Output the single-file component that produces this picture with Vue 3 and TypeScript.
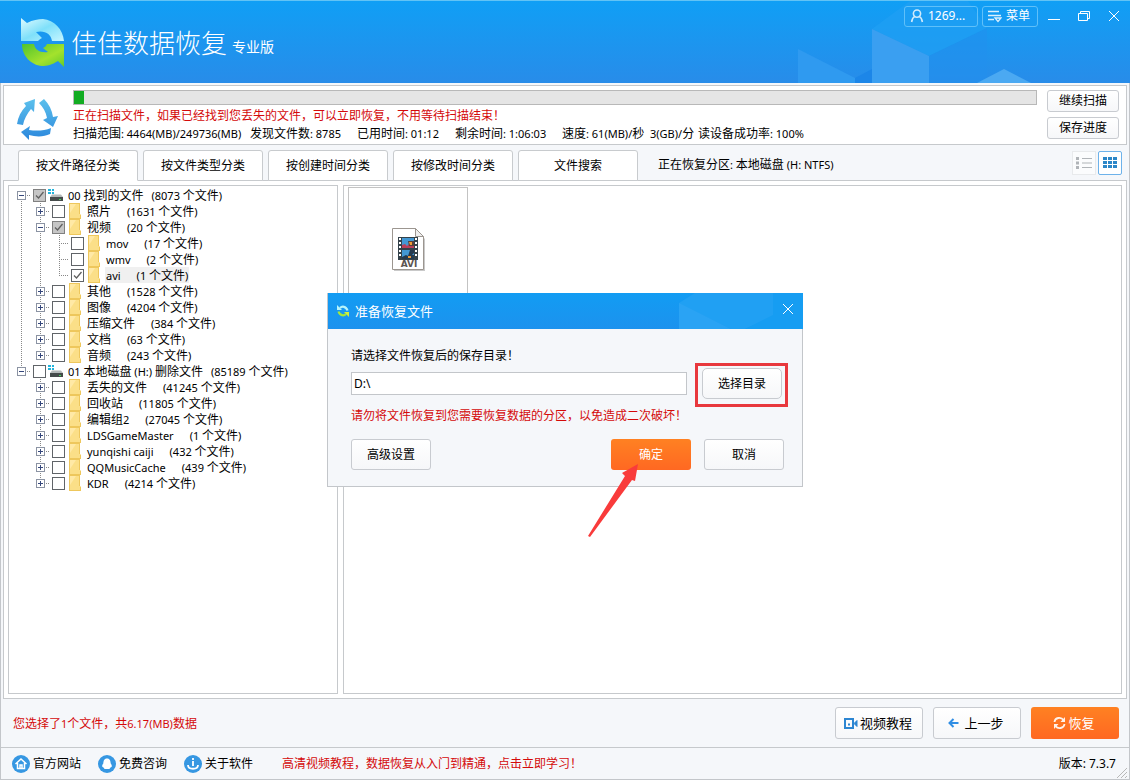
<script setup lang="ts">
import { computed, h, ref } from 'vue'

// Wraps Latin runs in their own span so they can take a smaller size than the Chinese text.
const Mixed = (props: { text: string }) =>
  h(
    'span',
    { class: 'mixed' },
    props.text
      .split(/([\x20-\x7e]+)/)
      .filter((part) => part.length > 0)
      .map((part) => (/^[\x20-\x7e]/.test(part) ? h('span', { class: 'latin' }, part) : part)),
  )
Mixed.props = ['text']

type Check = 'off' | 'on' | 'partial'
interface TreeRow {
  level: number
  name: string
  count: string
  check: Check
  open?: boolean
  guides: string[]
  selected?: boolean
}

const rows = ref<TreeRow[]>([
  { level: 0, name: '00 找到的文件', count: '(8073 个文件)', check: 'partial', open: true, guides: ['start'] },
  { level: 1, name: '照片', count: '(1631 个文件)', check: 'off', open: false, guides: ['line', 'tee'] },
  { level: 1, name: '视频', count: '(20 个文件)', check: 'partial', open: true, guides: ['line', 'tee'] },
  { level: 2, name: 'mov', count: '(17 个文件)', check: 'off', guides: ['line', 'line', 'tee'] },
  { level: 2, name: 'wmv', count: '(2 个文件)', check: 'off', guides: ['line', 'line', 'tee'] },
  { level: 2, name: 'avi', count: '(1 个文件)', check: 'on', guides: ['line', 'line', 'end'], selected: true },
  { level: 1, name: '其他', count: '(1528 个文件)', check: 'off', open: false, guides: ['line', 'tee'] },
  { level: 1, name: '图像', count: '(4204 个文件)', check: 'off', open: false, guides: ['line', 'tee'] },
  { level: 1, name: '压缩文件', count: '(384 个文件)', check: 'off', open: false, guides: ['line', 'tee'] },
  { level: 1, name: '文档', count: '(63 个文件)', check: 'off', open: false, guides: ['line', 'tee'] },
  { level: 1, name: '音频', count: '(243 个文件)', check: 'off', open: false, guides: ['line', 'end'] },
  { level: 0, name: '01 本地磁盘 (H:) 删除文件', count: '(85189 个文件)', check: 'off', open: true, guides: ['end'] },
  { level: 1, name: '丢失的文件', count: '(41245 个文件)', check: 'off', open: false, guides: ['blank', 'tee'] },
  { level: 1, name: '回收站', count: '(11805 个文件)', check: 'off', open: false, guides: ['blank', 'tee'] },
  { level: 1, name: '编辑组2', count: '(27045 个文件)', check: 'off', open: false, guides: ['blank', 'tee'] },
  { level: 1, name: 'LDSGameMaster', count: '(1 个文件)', check: 'off', open: false, guides: ['blank', 'tee'] },
  { level: 1, name: 'yunqishi caiji', count: '(432 个文件)', check: 'off', open: false, guides: ['blank', 'tee'] },
  { level: 1, name: 'QQMusicCache', count: '(439 个文件)', check: 'off', open: false, guides: ['blank', 'tee'] },
  { level: 1, name: 'KDR', count: '(4214 个文件)', check: 'off', open: false, guides: ['blank', 'end'] },
])

const tabs = ['按文件路径分类', '按文件类型分类', '按创建时间分类', '按修改时间分类', '文件搜索']
const activeTab = ref(0)
const stats = [
  '扫描范围: 4464(MB)/249736(MB)',
  '发现文件数: 8785',
  '已用时间: 01:12',
  '剩余时间: 1:06:03',
  '速度: 61(MB)/秒',
  '3(GB)/分',
  '读设备成功率: 100%',
]
const progress = ref(1)
const barStyle = computed(() => ({ width: `${progress.value}%` }))
const folder = ref('D:\\')
</script>

<template>
  <div class="window">
    <header class="titlebar">
      <svg class="cubes" width="260" height="82" viewBox="0 0 260 82" aria-hidden="true">
        <path d="M0 48 57 77V82H0Z" fill="#2f9af0" />
        <path d="M57 77 74 68V82H57Z" fill="#1c86e8" />
        <path d="M74 28 112 0H170L189 27 131 55Z" fill="#20a0f3" opacity=".7" />
        <path d="M74 28 131 55V82H74Z" fill="#3a9ff1" />
        <path d="M131 55 189 27V82H131Z" fill="#228fee" opacity=".5" />
        <path d="M179 82 206 68 233 82Z" fill="#4ba9f2" />
      </svg>
      <svg class="logo" width="44" height="49" viewBox="0 0 44 49" aria-hidden="true">
        <defs>
          <linearGradient id="logoTop" x1="0" y1="0" x2="1" y2="1">
            <stop offset="0" stop-color="#e0fbff" />
            <stop offset=".5" stop-color="#7fe0fa" />
            <stop offset="1" stop-color="#c6f6ff" />
          </linearGradient>
          <linearGradient id="logoBottom" x1="0" y1="0" x2="1" y2="1">
            <stop offset="0" stop-color="#4fc32e" />
            <stop offset=".6" stop-color="#a4e22c" />
            <stop offset="1" stop-color="#62cc2c" />
          </linearGradient>
        </defs>
        <path d="M0 0 6 5C12 2 17 1 22 1 33 2 42 11 43 23H31C30 16 24 12 15 14L21 20C19 21 18 22 17 23H0Z" fill="url(#logoTop)" />
        <path d="M43 49 37 43C31 47 26 48 21 48 10 47 1 38 1 26H13C14 32 19 35 27 34L22 30C24 29 25 28 26 26H43Z" fill="url(#logoBottom)" />
      </svg>
      <h1>佳佳数据恢复</h1>
      <span class="edition">专业版</span>
      <div class="window-tools">
        <button class="ghost account">
          <svg width="14" height="14" viewBox="0 0 14 14" fill="none" stroke="currentColor" stroke-width="1.6" opacity=".8">
            <circle cx="7" cy="4.6" r="3.6" />
            <path d="M4.8 7.4C2.5 8.6 2 10.5 1.6 13M9.2 7.4C11.500 8.600 12 10.500 12.400 13" />
          </svg>
          <span>1269...</span>
        </button>
        <button class="ghost menu">
          <svg width="15" height="14" viewBox="0 0 15 14" fill="none" stroke="currentColor" stroke-width="1.300" opacity=".85">
            <path d="M1 2.500H12M1 6.500H14M1 10.500H7M8 9H14L11 12.500Z" />
          </svg>
          <span>菜单</span>
        </button>
        <button class="sys" aria-label="最小化">
          <svg width="12" height="12" viewBox="0 0 12 12" stroke="#fff"><path d="M0 9.500H12" /></svg>
        </button>
        <button class="sys" aria-label="还原">
          <svg width="12" height="12" viewBox="0 0 12 12" fill="none" stroke="#fff">
            <path d="M.5 3.500H9.500V10.500H.5ZM2.500 3V1.500H11.500V8.500H10" />
          </svg>
        </button>
        <button class="sys" aria-label="关闭">
          <svg width="12" height="12" viewBox="0 0 12 12" stroke="#fff"><path d="M1 1 11 11M11 1 1 11" /></svg>
        </button>
      </div>
    </header>

    <section class="scan">
      <svg class="cycle" width="44" height="42" viewBox="0 0 44 42" aria-hidden="true">
        <defs>
          <linearGradient id="cycleFill" x1="0" y1="0" x2="0" y2="42" gradientUnits="userSpaceOnUse">
            <stop offset="0" stop-color="#5cc0ec" />
            <stop offset="1" stop-color="#2a86dc" />
          </linearGradient>
        </defs>
        <g fill="url(#cycleFill)">
          <path d="M8 4 19 0 18 13 15 10C11 15 8 20 7 26L1 25C2 18 5 12 10 7Z" />
          <path d="M23 4 28 0C33 5 36 11 37 18L42 17 37 28 27 21 31 19C30 13 27 8 23 4Z" />
          <path d="M5 33 14 27 13 31C20 32 28 32 35 29L34 35C28 38 20 38 13 36V41Z" />
        </g>
      </svg>
      <div class="scan-info">
        <div class="progress" role="progressbar" aria-label="扫描进度" :aria-valuenow="progress">
          <div class="bar" :style="barStyle"></div>
        </div>
        <p class="warn">正在扫描文件，如果已经找到您丢失的文件，可以立即恢复，不用等待扫描结束！</p>
        <div class="stats"><Mixed v-for="s in stats" :key="s" :text="s" /></div>
      </div>
      <div class="scan-actions">
        <button class="btn small">继续扫描</button>
        <button class="btn small">保存进度</button>
      </div>
    </section>

    <nav class="tabs">
      <button v-for="(tab, i) in tabs" :key="tab" class="tab" :class="{ active: i === activeTab }" @click="activeTab = i">
        {{ tab }}
      </button>
      <Mixed class="partition" text="正在恢复分区: 本地磁盘 (H: NTFS)" />
      <div class="views">
        <button class="view" aria-label="列表">
          <svg width="16" height="12" viewBox="0 0 16 12" fill="#b0b4b8">
            <path d="M0 0H3V3H0ZM0 4.500H3V7.500H0ZM0 9H3V12H0ZM6 1H16V2H6ZM6 5.500H16V6.500H6ZM6 10H16V11H6Z" />
          </svg>
        </button>
        <button class="view on" aria-label="图标">
          <svg width="14" height="12" viewBox="0 0 14 12" fill="#2c87c8">
            <path d="M0 0H4V3H0ZM5 0H9V3H5ZM10 0H14V3H10ZM0 4H4V7H0ZM5 4H9V7H5ZM10 4H14V7H10ZM0 8H4V11H0ZM5 8H9V11H5ZM10 8H14V11H10Z" />
          </svg>
        </button>
      </div>
    </nav>

    <main class="content">
      <ul class="tree">
        <li v-for="row in rows" :key="row.name" class="row">
          <span v-for="(g, i) in row.guides" :key="i" class="guide" :class="g">
            <button
              v-if="i === row.level && row.open !== undefined"
              class="expander"
              :class="{ closed: !row.open }"
              :aria-label="(row.open ? '折叠 ' : '展开 ') + row.name"
            ></button>
          </span>
          <input :id="'n-' + row.name" type="checkbox" :class="row.check" :checked="row.check !== 'off'" />
          <svg v-if="row.level === 0" class="glyph" width="16" height="16" viewBox="0 0 16 16" aria-hidden="true">
            <path d="M0 2H3V4H0ZM4 2H6V4H4ZM0 5H3V7H0ZM4 5H6V7H4Z" fill="#22b4dc" />
            <path d="M4 7.500H13L15 10H2Z" fill="#b4b9b9" />
            <path d="M2 10H15V14H2Z" fill="#454b4b" />
            <path d="M11 12H13V13H11Z" fill="#45d860" />
          </svg>
          <svg v-else class="glyph" width="16" height="16" viewBox="0 0 16 16" aria-hidden="true">
            <path d="M2 0H13V11L14 12V16H2Z" fill="#eec75c" />
            <path d="M3 1H12V11H13V15H3Z" fill="#fbdf88" />
            <path d="M3 1H9L3 10Z" fill="#ffe9a6" />
          </svg>
          <label class="name" :class="{ selected: row.selected, root: row.level === 0 }" :for="'n-' + row.name">
            <Mixed :text="row.name" />
            <Mixed :text="row.count" />
          </label>
        </li>
      </ul>

      <section class="files">
        <div class="tile">
          <svg width="34" height="44" viewBox="0 0 34 44" role="img" aria-label="AVI">
            <path d="M2 2H24L33 11V43H2Z" fill="#c9c9c9" />
            <path d="M.5 .5H23.500L31.500 8.500V41.500H.5Z" fill="#fff" stroke="#9c9690" />
            <path d="M23.500 .5V8.500H31.500Z" fill="#eee" stroke="#9c9690" />
            <path d="M6 9H26V32H6Z" fill="#34424a" />
            <path d="M10 10H22V20H10ZM10 22H22V31H10Z" fill="#4398d4" />
            <path d="M10 17 13 16 15 18 17 16 22 17V20H10Z" fill="#b8405a" />
            <path d="M16 13H22V18H17Z" fill="#5a4038" />
            <path d="M17 14H20V17H18Z" fill="#ef9b33" />
            <path d="M10 29 14 27 16 28 18 22H22V25L20 27H22V31H10Z" fill="#263b50" />
            <path d="M16 28H19V30H16Z" fill="#e99a3c" />
            <path d="M7 10h2v2H7zM7 14h2v2H7zM7 18h2v2H7zM7 22h2v2H7zM7 26h2v2H7zM23 10h2v2H23zM23 14h2v2H23zM23 18h2v2H23zM23 22h2v2H23zM23 26h2v2H23z" fill="#fff" />
            <text x="17" y="39" text-anchor="middle" class="ext">AVI</text>
          </svg>
        </div>
      </section>
    </main>

    <section class="actions">
      <Mixed class="warn grow" text="您选择了1个文件，共6.17(MB)数据" />
      <button class="btn large">
        <svg width="14" height="14" viewBox="0 0 14 14" fill="none" stroke="#2c86d2" stroke-width="2">
          <path d="M1 3H9V12H1ZM4 8.500H6" />
          <path d="M10 7.500 13 4.500V10.500Z" fill="#2c86d2" stroke-width="1" />
        </svg>
        视频教程
      </button>
      <button class="btn large back">
        <svg width="11" height="10" viewBox="0 0 11 10" fill="none" stroke="#2f8de4" stroke-width="2">
          <path d="M5.500 1 1.500 5 5.500 9M2 5H10.500" />
        </svg>
        上一步
      </button>
      <button class="btn large primary">
        <svg width="13" height="14" viewBox="0 0 13 14" fill="none" stroke="#fff" stroke-width="1.800" opacity=".9">
          <path d="M1.500 6C2 1.500 8 .5 10.500 4M11.500 8C11 12.500 5 13.500 2.500 10" />
          <path d="M12 1V6H7.500ZM1 13V8H5.500Z" fill="#fff" stroke="none" />
        </svg>
        恢复
      </button>
    </section>

    <footer class="statusbar">
      <a href="#">
        <svg width="18" height="18" viewBox="0 0 18 18" fill="none" stroke="#fff" stroke-width="1.500">
          <circle cx="9" cy="9" r="9" fill="#3697e2" stroke="none" />
          <path d="M3.500 9 9 4 14.500 9M5.500 8V13.500H12.500V8M8 13V10H10V13" />
        </svg>
        官方网站
      </a>
      <a href="#">
        <svg width="18" height="18" viewBox="0 0 18 18">
          <circle cx="9" cy="9" r="9" fill="#3697e2" />
          <path d="M9 3.500C12 3.500 12.500 6 12.700 8.500 14 10 14 11.500 13.500 12 12.500 12 12 13 11.500 14H6.500C6 13 5.500 12 4.500 12 4 11.500 4 10 5.300 8.500 5.500 6 6 3.500 9 3.500Z" fill="#fff" />
        </svg>
        免费咨询
      </a>
      <a href="#">
        <svg width="18" height="18" viewBox="0 0 18 18" fill="none" stroke="#fff" stroke-width="1.800">
          <circle cx="9" cy="9" r="9" fill="#3697e2" stroke="none" />
          <path d="M9 3V5M9 6V11M4 10C4 15 14 15 14 10" />
        </svg>
        关于软件
      </a>
      <a class="warn promo" href="#">高清视频教程，数据恢复从入门到精通，点击立即学习！</a>
      <span class="version">版本: 7.3.7</span>
      <svg class="grip" width="12" height="12" viewBox="0 0 12 12" stroke="#b8b8b8" aria-hidden="true">
        <path d="M1 11 11 1M5 11 11 5M9 11 11 9" />
      </svg>
    </footer>

    <div class="overlay">
      <section class="dialog" role="dialog" aria-labelledby="dlg-title">
        <header class="dialog-head">
          <svg class="facet" width="124" height="36" viewBox="0 0 124 36" aria-hidden="true">
            <path d="M0 10 16 0H94V24L66 36H52L0 11Z" fill="#20a0f3" />
            <path d="M0 10 52 36H0Z" fill="#2aa3f4" />
            <path d="M94 0H124V36H66L94 22Z" fill="#169df2" />
          </svg>
          <svg width="12" height="12" viewBox="0 0 12 12" fill="none" stroke-width="2.200" aria-hidden="true">
            <path d="M3 3C5 1 9 1 10.500 5.500" stroke="#b6f4fb" />
            <path d="M0 0V5H5Z" fill="#b6f4fb" />
            <path d="M9 9C7 11 3 11 1.500 6.500" stroke="#a6e83a" />
            <path d="M12 12V7H7Z" fill="#d0f03a" />
          </svg>
          <h2 id="dlg-title">准备恢复文件</h2>
          <button class="sys" aria-label="关闭对话框">
            <svg width="12" height="12" viewBox="0 0 12 12" stroke="#fff"><path d="M1 1 11 11M11 1 1 11" /></svg>
          </button>
        </header>
        <div class="dialog-body">
          <label for="save-dir">请选择文件恢复后的保存目录！</label>
          <div class="pick">
            <input id="save-dir" v-model="folder" type="text" />
            <span class="marked"><button class="btn">选择目录</button></span>
          </div>
          <p class="warn">请勿将文件恢复到您需要恢复数据的分区，以免造成二次破坏！</p>
          <div class="dialog-actions">
            <button class="btn">高级设置</button>
            <button class="btn primary ok">确定</button>
            <button class="btn">取消</button>
          </div>
        </div>
        <svg class="arrow" width="52" height="74" viewBox="0 0 52 74" aria-hidden="true">
          <path d="M50 0 47 17 44 16 2 73 0 72 37 12 34 9Z" fill="#f93b3b" />
        </svg>
      </section>
    </div>
  </div>
</template>

<style>
body {
  background: #f5f7fa;
}
.mixed {
  white-space: pre;
}
.mixed .latin {
  font-size: 11px;
}
</style>

<style scoped>
* {
  box-sizing: border-box;
}
.window {
  position: relative;
  display: flex;
  flex-direction: column;
  min-height: 100vh;
  border: 1px solid #c3c6ca;
  border-top: 0;
  background: #f5f7fa;
  color: #000;
  font: 12px/18px 'Noto Sans', 'Noto Sans CJK SC', sans-serif;
}
button,
input {
  margin: 0;
  padding: 0;
  font: inherit;
  color: inherit;
}
svg {
  flex: none;
  display: block;
}
p,
h1,
h2,
ul {
  margin: 0;
  padding: 0;
  font-weight: 400;
}
.warn {
  color: #d40a0a;
}

.titlebar {
  position: relative;
  display: flex;
  height: 83px;
  margin: 0 -1px;
  padding-left: 21px;
  border-top: 1px solid #62c3f5;
  background: linear-gradient(#109ff5, #288ce9);
  color: #fff;
}
.cubes {
  position: absolute;
  top: 0;
  right: 72px;
}
.logo {
  margin-top: 17px;
}
h1 {
  margin: 22px 0 0 6px;
  font-size: 26px;
  line-height: 40px;
  font-weight: 300;
}
.edition {
  margin: 35px 0 0 5px;
  font-size: 14px;
  line-height: 22px;
}
.window-tools {
  position: relative;
  display: flex;
  margin: 4px 4px 0 auto;
  height: 22px;
  align-items: center;
}
.ghost {
  display: flex;
  align-items: center;
  gap: 4px;
  height: 21px;
  padding: 0 5px;
  border: 1px solid #5fc0fa;
  border-radius: 3px;
  background: none;
  line-height: 18px;
}
.account {
  width: 74px;
  margin-right: 4px;
}
.menu {
  width: 56px;
  margin-right: 4px;
  padding: 0 4px;
}
.sys {
  display: grid;
  place-items: center;
  width: 24px;
  height: 22px;
  border: 0;
  background: none;
}
.sys + .sys {
  margin-left: 6px;
}

.scan {
  display: flex;
  margin: 2px 2px 0;
  padding: 4px 7px 1px 12px;
  border: 1px solid #c6c9cc;
  background: #fff;
}
.cycle {
  margin-top: 9px;
}
.scan-info {
  flex: 1;
  min-width: 0;
  margin-left: 13px;
}
.progress {
  height: 15px;
  margin-bottom: 2px;
  border: 1px solid #b8b8b8;
  background: #e5e5e5;
}
.bar {
  height: 13px;
  background: #12ac22;
}
.stats {
  display: grid;
  grid-template-columns: 177px 107px 98px 107px 88px 48px auto;
}
.scan-actions {
  display: flex;
  flex-direction: column;
  gap: 5px;
  margin-left: 10px;
}
.btn {
  display: flex;
  align-items: center;
  justify-content: center;
  gap: 3px;
  width: 80px;
  height: 31px;
  border: 1px solid #c8cbd0;
  border-radius: 3px;
  background: linear-gradient(#fff, #f6f7f9);
}
.btn.small {
  width: 72px;
  height: 22px;
}
.btn.large {
  gap: 2px;
  width: 88px;
  height: 32px;
  padding-right: 2px;
  font-size: 13px;
}
.btn.large.back {
  gap: 5px;
}
.btn.primary {
  border: 0;
  background: linear-gradient(#ff8122, #ff6822);
  color: #fff;
}

.tabs {
  position: relative;
  display: flex;
  gap: 5px;
  margin: 5px 7px -1px 17px;
}
.tab {
  width: 120px;
  height: 31px;
  border: 1px solid #c8cbce;
  border-radius: 3px 3px 0 0;
  background: #fff;
}
.tab.active {
  border-bottom-color: #fff;
}
.partition {
  margin: 6px 0 0 15px;
}
.views {
  display: flex;
  gap: 2px;
  margin: 1px 0 0 auto;
}
.view {
  display: grid;
  place-items: center;
  width: 24px;
  height: 24px;
  border: 1px solid #e8eaec;
  background: #fbfcfd;
}
.view.on {
  border-color: #6db2ea;
  border-radius: 2px;
  background: #fff;
}

.content {
  flex: 1;
  display: flex;
  gap: 5px;
  margin: 0 2px;
  padding: 4px;
  border: 1px solid #c6c9cc;
  background: #fff;
}
.tree {
  width: 330px;
  padding: 1px 0 0 3px;
  border: 1px solid #c6c9cc;
  list-style: none;
}
.row {
  display: flex;
  align-items: center;
  height: 16px;
}
.guide {
  --dots: repeating-linear-gradient(#888 0 1px, transparent 1px 2px);
  --dash: repeating-linear-gradient(90deg, #888 0 1px, transparent 1px 2px);
  display: grid;
  place-items: center;
  width: 19px;
  height: 16px;
  background-repeat: no-repeat;
}
.guide.line {
  background-image: var(--dots);
  background-size: 1px 16px;
  background-position: 9px 0;
}
.guide.tee,
.guide.end,
.guide.start {
  background-image: var(--dots), var(--dash);
  background-size: 1px 16px, 10px 1px;
  background-position: 9px 0, 9px 8px;
}
.guide.end {
  background-size: 1px 8px, 10px 1px;
}
.guide.start {
  background-size: 1px 8px, 10px 1px;
  background-position: 9px 8px, 9px 8px;
}
.expander {
  width: 9px;
  height: 9px;
  border: 1px solid #8b93a3;
  background: linear-gradient(#35477c, #35477c) center / 5px 1px no-repeat #fff;
}
.expander.closed {
  background:
    linear-gradient(#35477c, #35477c) center / 5px 1px no-repeat,
    linear-gradient(#35477c, #35477c) center / 1px 5px no-repeat #fff;
}
.row input {
  appearance: none;
  width: 13px;
  height: 13px;
  margin-left: 2px;
  border: 1px solid #606468;
  background: #fff center / 11px 11px no-repeat;
}
.row input:checked {
  background-image: url("data:image/svg+xml,%3Csvg xmlns='http://www.w3.org/2000/svg' viewBox='0 0 11 11'%3E%3Cpath d='M2 5.500 4.500 8 9.500 2' fill='none' stroke='%23606060' stroke-width='1.300'/%3E%3C/svg%3E");
}
.row input.partial {
  border-color: #808080;
  background-color: #c6c6c6;
}
.glyph {
  margin-left: 2px;
}
.name {
  display: flex;
  gap: 16px;
  height: 16px;
  margin-left: 3px;
  padding: 0 1px;
  line-height: 17px;
}
.name.root {
  gap: 8px;
}
.name.selected {
  background: #f0f0f0;
}

.files {
  flex: 1;
  padding: 1px 4px;
  border: 1px solid #c6c9cc;
}
.tile {
  display: flex;
  justify-content: center;
  width: 120px;
  height: 160px;
  padding: 40px 0 0 1px;
  border: 1px solid #c3c3c3;
}
.ext {
  fill: #5c5450;
  font: 700 9px 'DejaVu Sans', sans-serif;
}

.actions {
  display: flex;
  align-items: center;
  gap: 10px;
  height: 48px;
  padding: 0 10px 0 12px;
}
.grow {
  flex: 1;
  padding-top: 2px;
}
.statusbar {
  display: flex;
  align-items: center;
  height: 32px;
  padding: 0 1px 0 11px;
  border-top: 1px solid #c6c9cc;
}
.statusbar a {
  display: flex;
  align-items: center;
  gap: 3px;
  margin-right: 17px;
  color: #000;
  text-decoration: none;
}
.statusbar a.promo {
  margin-left: 12px;
  color: #d40a0a;
}
.version {
  margin-left: auto;
}
.grip {
  align-self: flex-end;
}

.overlay {
  position: absolute;
  inset: 0;
  display: grid;
  place-items: center;
  pointer-events: none;
}
.dialog {
  position: relative;
  width: 476px;
  border: 1px solid #c3c6ca;
  border-top: 0;
  background: #f5f7fa;
  pointer-events: auto;
}
.dialog-head {
  position: relative;
  display: flex;
  align-items: center;
  height: 36px;
  margin: 0 -1px 0 0;
  padding: 0 3px 0 9px;
  background: linear-gradient(#129cf3, #1c92ee);
  color: #fff;
}
.facet {
  position: absolute;
  top: 0;
  right: 0;
}
h2 {
  margin-left: 6px;
  font-size: 13px;
}
.dialog-head .sys {
  position: relative;
  margin: -4px 0 0 auto;
}
.dialog-body {
  padding: 17px 18px 16px 23px;
  line-height: 20px;
}
.dialog-body label {
  display: block;
}
.pick {
  display: flex;
  align-items: center;
  gap: 15px;
  margin: 2px 2px 7px 0;
}
.pick input {
  flex: 1;
  min-width: 0;
  height: 23px;
  padding: 0 2px;
  border: 1px solid #c3c6ca;
  background: #fff;
}
.marked {
  position: relative;
}
.marked::after {
  content: '';
  position: absolute;
  inset: -5px -6px -8px -7px;
  border: 3px solid #e8383d;
  pointer-events: none;
}
.marked .btn {
  border-radius: 5px;
}
.dialog-actions {
  display: flex;
  gap: 13px;
  margin-top: 13px;
}
.dialog .btn {
  padding-top: 2px;
}
.ok {
  margin-left: auto;
}
.arrow {
  position: absolute;
  left: 260px;
  top: 171px;
}
</style>
